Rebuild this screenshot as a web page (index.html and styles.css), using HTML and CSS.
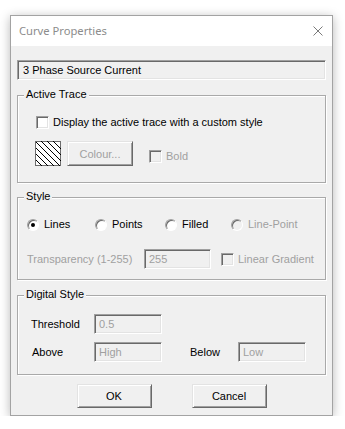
FILE: index.html
```html
<!DOCTYPE html>
<html>
<head>
<meta charset="utf-8">
<link rel="stylesheet" href="styles.css">
</head>
<body>
<div class="window">
  <div class="titlebar">
    <span class="title">Curve Properties</span>
    <svg class="close" width="10" height="10" viewBox="0 0 10 10"><path d="M0.5 0.5 L9.5 9.5 M9.5 0.5 L0.5 9.5" stroke="#7a7a7a" stroke-width="1" fill="none"/></svg>
  </div>
  <div class="content">
    <div class="namebox">3 Phase Source Current</div>

    <div class="group g-active">
      <span class="legend">Active Trace</span>
      <div class="row r-check">
        <span class="check"></span>
        <span class="lbl">Display the active trace with a custom style</span>
      </div>
      <div class="row r-swatch">
        <svg class="swatch" width="26" height="25" viewBox="0 0 26 25">
          <rect x="0.5" y="0.5" width="25" height="24" fill="#fff" stroke="#6d6d6d"/>
          <g stroke="#000" stroke-width="1">
            <path d="M1 -17 L26 8"/>
            <path d="M1 -11 L26 14"/>
            <path d="M1 -5 L26 20"/>
            <path d="M1 1 L25 25"/>
            <path d="M1 7 L19 25"/>
            <path d="M1 13 L13 25"/>
            <path d="M1 19 L7 25"/>
          </g>
        </svg>
        <span class="btn btn-colour disabled">Colour...</span>
        <span class="check dis chk-bold"></span>
        <span class="lbl disabled">Bold</span>
      </div>
    </div>

    <div class="group g-style">
      <span class="legend">Style</span>
      <div class="row r-radios">
        <span class="opt o1"><span class="radio on"></span><span class="lbl">Lines</span></span>
        <span class="opt o2"><span class="radio"></span><span class="lbl">Points</span></span>
        <span class="opt o3"><span class="radio"></span><span class="lbl">Filled</span></span>
        <span class="opt"><span class="radio dis"></span><span class="lbl disabled">Line-Point</span></span>
      </div>
      <div class="row r-trans">
        <span class="lbl disabled trans-lbl">Transparency (1-255)</span>
        <span class="field f-trans">255</span>
        <span class="check dis chk-grad"></span>
        <span class="lbl disabled">Linear Gradient</span>
      </div>
    </div>

    <div class="group g-digital">
      <span class="legend">Digital Style</span>
      <div class="row r-thr">
        <span class="lbl dlbl">Threshold</span>
        <span class="field f-d">0.5</span>
      </div>
      <div class="row r-above">
        <span class="lbl dlbl above">Above</span>
        <span class="field f-d">High</span>
        <span class="lbl below">Below</span>
        <span class="field f-d">Low</span>
      </div>
    </div>

    <div class="buttons">
      <span class="btn btn-main">OK</span>
      <span class="btn btn-main">Cancel</span>
    </div>
  </div>
</div>
</body>
</html>
```

FILE: styles.css
```css
html, body {
  margin: 0;
  padding: 0;
  background: #ffffff;
}
body {
  padding: 15px 0 0 10px;
  font-family: "Liberation Sans", Arial, sans-serif;
  font-size: 11px;
  color: #000;
}
.window {
  width: 323px;
  height: 401px;
  box-sizing: border-box;
  border: 1px solid #a3a3a3;
  background: #f0f0f0;
  box-shadow: 0 2px 10px rgba(0, 0, 0, 0.28);
}
.titlebar {
  height: 30px;
  background: #ffffff;
  display: flex;
  align-items: center;
  justify-content: space-between;
  padding-left: 8px;
}
.title {
  font-family: "Noto Sans", "Open Sans", sans-serif;
  font-size: 11.2px;
  color: #8c8c8c;
  margin-top: -1px;
}
.close {
  margin-right: 9px;
  display: block;
}
.content {
  padding: 14px 6px 0 6px;
}
.namebox {
  height: 20px;
  box-sizing: border-box;
  border-style: solid;
  border-width: 1px;
  border-color: #a0a0a0 #ffffff #ffffff #a0a0a0;
  box-shadow: inset 1px 1px 0 #696969, inset -1px -1px 0 #e3e3e3;
  padding-left: 5px;
  line-height: 18px;
}
.group {
  position: relative;
  box-sizing: border-box;
  border: 1px solid #a9a9a9;
  box-shadow: inset 1px 1px 0 #ffffff, 1px 1px 0 #ffffff;
  padding-left: 17px;
}
.legend {
  position: absolute;
  left: 6px;
  top: -8px;
  line-height: 13px;
  padding: 0 2px;
  background: #f0f0f0;
}
.g-active {
  margin-top: 15px;
  height: 88px;
  padding-top: 20px;
}
.g-style {
  margin-top: 14px;
  height: 83px;
  padding-top: 20px;
  padding-left: 9px;
}
.g-digital {
  margin-top: 15px;
  height: 80px;
  padding-top: 18px;
  padding-left: 13px;
}
.row {
  display: flex;
  align-items: center;
}
.lbl {
  white-space: nowrap;
  line-height: 13px;
}
.disabled {
  color: #a0a0a0;
}
.check {
  width: 13px;
  height: 13px;
  box-sizing: border-box;
  background: #ffffff;
  border-style: solid;
  border-width: 1px;
  border-color: #a0a0a0 #ffffff #ffffff #a0a0a0;
  box-shadow: inset 1px 1px 0 #696969, inset -1px -1px 0 #e3e3e3;
  flex: none;
}
.check.dis {
  background: #f0f0f0;
}
.r-check .check {
  margin-left: 1px;
  margin-right: 4px;
}
.r-swatch {
  margin-top: 12px;
  align-items: flex-start;
}
.swatch {
  display: block;
  flex: none;
}
.btn {
  box-sizing: border-box;
  display: flex;
  align-items: center;
  justify-content: center;
  background: #f0f0f0;
  border-style: solid;
  border-width: 1px;
  border-color: #e3e3e3 #696969 #696969 #e3e3e3;
  box-shadow: inset 1px 1px 0 #ffffff, inset -1px -1px 0 #a0a0a0;
}
.btn-colour {
  width: 66px;
  height: 25px;
  margin-left: 6px;
}
.chk-bold {
  margin-left: 16px;
  margin-top: 9px;
  margin-right: 4px;
}
.r-swatch .lbl {
  margin-top: 9px;
}
.opt {
  display: flex;
  align-items: center;
}
.o1 { width: 68px; }
.o2 { width: 70px; }
.o3 { width: 66px; }
.radio {
  width: 12px;
  height: 12px;
  box-sizing: border-box;
  border-radius: 50%;
  background: #ffffff;
  border-style: solid;
  border-width: 1px;
  border-color: #a0a0a0 #ffffff #ffffff #a0a0a0;
  box-shadow: inset 1px 1px 0 #696969;
  margin-right: 5px;
  position: relative;
  flex: none;
}
.radio.on::after {
  content: "";
  position: absolute;
  left: 3px;
  top: 3px;
  width: 4px;
  height: 4px;
  border-radius: 50%;
  background: #000;
}
.radio.dis {
  background: #f0f0f0;
}
.r-trans {
  margin-top: 18px;
}
.trans-lbl {
  width: 117px;
}
.field {
  height: 20px;
  box-sizing: border-box;
  border-style: solid;
  border-width: 1px;
  border-color: #a0a0a0 #ffffff #ffffff #a0a0a0;
  box-shadow: inset 1px 1px 0 #696969, inset -1px -1px 0 #e3e3e3;
  padding-left: 4px;
  line-height: 18px;
  color: #a0a0a0;
  flex: none;
}
.f-trans {
  width: 67px;
}
.chk-grad {
  margin-left: 10px;
  margin-right: 4px;
}
.dlbl {
  width: 63px;
}
.above {
  padding-left: 1px;
  width: 62px;
}
.f-d {
  width: 68px;
}
.r-above {
  margin-top: 8px;
}
.below {
  margin-left: 28px;
  width: 48px;
}
.buttons {
  display: flex;
  justify-content: center;
  gap: 40px;
  margin-top: 9px;
}
.btn-main {
  width: 75px;
  height: 24px;
}
```
